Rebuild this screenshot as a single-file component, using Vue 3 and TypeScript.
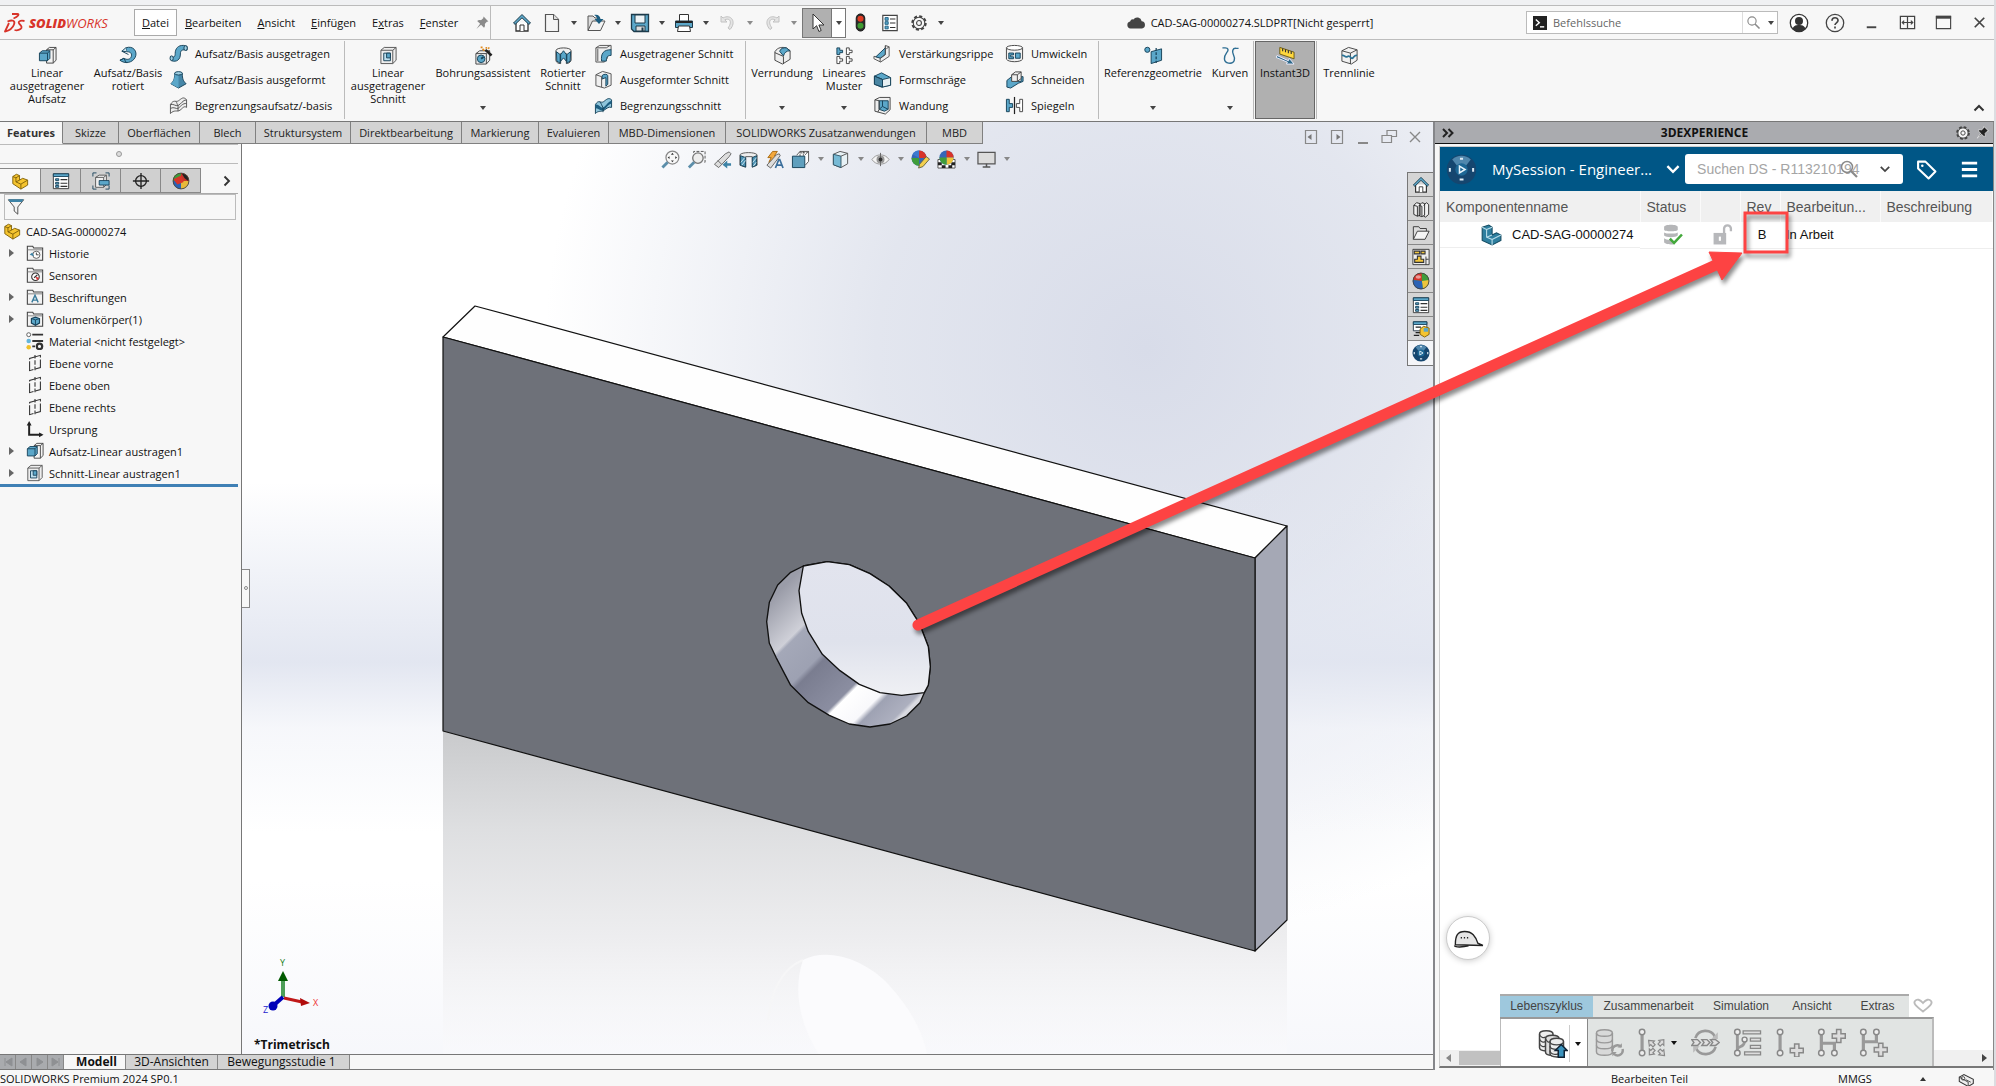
<script setup lang="ts">
import { h } from 'vue'

const B = '#5ba7c9'
const D = '#1c5d80'
const K = '#333'

const art: Record<string, string> = {
  home: `<path d="M4 9.5V18h12V9.5" fill="#fff" stroke="${K}" stroke-width="1.3"/><path d="M8 18v-6h4v6" fill="#fff" stroke="${K}"/><path d="M10 1.5 1.5 10l1.6 1.4L10 4.8l6.900 6.600L18.500 10z" fill="${B}" stroke="#1d3b4b"/>`,
  file: `<path d="M3.500 1.500h8l5 5v12h-13z" fill="#f4f4f4" stroke="#555" stroke-width="1.200"/><path d="M11.500 1.500v5h5" fill="#ddd" stroke="#555"/>`,
  open: `<path d="M2 17.500V3h5l2 2h4v3" fill="#ddd" stroke="#555"/><path d="M2 17.500 6.500 8H19l-4.500 9.500z" fill="#f3f3f3" stroke="#555"/><path d="M8 2c4-1 6 1 6.500 4h3L13 11 8.500 6H11c0-2-1-3-3-4z" fill="${D}"/>`,
  save: `<path d="M1.500 1.500h17v17H4l-2.500-2.500z" fill="${B}" stroke="#1d3b4b" stroke-width="1.300"/><path d="M5 2h10v8H5z" fill="#eef4f7" stroke="#1d3b4b"/><path d="M6 13h9v5H6z" fill="#ddd" stroke="#1d3b4b"/><path d="M11.500 14.500h2V18h-2z" fill="#1d3b4b"/>`,
  print: `<path d="M5.500 8V1.500h9V8" fill="#fff" stroke="${K}"/><path d="M1.500 8h17v6.500h-17z" fill="${B}" stroke="#1d3b4b"/><path d="M2 8h16v2H2z" fill="#222"/><path d="M4.500 13h11l1 5.500h-13z" fill="#fff" stroke="${K}"/>`,
  undo: `<path d="M3 3v6h6L6.800 6.800C12 4.500 14.500 9 10 15l2 1.500C19 9 13 .500 5 5z" fill="#e4e4e4" stroke="#c2c2c2"/>`,
  redo: `<path d="M17 3v6h-6l2.200-2.200C8 4.500 5.500 9 10 15l-2 1.500C1 9 7 .500 15 5z" fill="#e4e4e4" stroke="#c2c2c2"/>`,
  cursor: `<path d="M6 1v15l3.600-3.300 2.300 5.800 2.300-1-2.300-5.500H17z" fill="#fff" stroke="#333"/>`,
  traffic: `<rect x="5.500" y="1" width="9" height="18" rx="4.500" fill="#2b2b2b" stroke="#111"/><circle cx="10" cy="6" r="3.200" fill="#e03c24"/><circle cx="10" cy="13.500" r="3.200" fill="#3f9b31"/>`,
  list: `<path d="M2 1.500h16v17H2z" fill="#fff" stroke="#444" stroke-width="1.300"/><path d="M4.500 4h3.500v3H4.500zM4.500 8.500h3.500v3H4.500zM4.500 13.500h3.500v3H4.500z" fill="${B}" stroke="${D}"/><path d="M10 5.500h6M10 10h6M10 15h6" stroke="#333" stroke-width="1.200"/>`,
  gear: `<circle cx="10" cy="10" r="7.400" fill="none" stroke="#444" stroke-width="2.400" stroke-dasharray="3.400 2.410"/><circle cx="10" cy="10" r="6.400" fill="#f7f7f7" stroke="#444" stroke-width="1.200"/><circle cx="10" cy="10" r="2.700" fill="none" stroke="#444" stroke-width="1.200"/>`,
  pin: `<path d="M12 2l6 6-2 .500-2.500 2.800c.600 2 .200 3.500-1 4.700L8.800 12.300 3 17.500 7.600 11 4 7.500c1.300-1.200 2.800-1.500 4.700-1L11.500 4z" fill="#8b8b8b"/>`,
  pinDark: `<path d="M12 2l6 6-2 .500-2.500 2.800c.600 2 .200 3.500-1 4.700L8.800 12.300 3 17.500 7.600 11 4 7.500c1.300-1.200 2.800-1.500 4.700-1L11.500 4z" fill="#222" stroke="#eee"/>`,
  cloud: `<path d="M4.500 15.500a3.500 3.500 0 0 1-.4-6.900 3 3 0 0 1 3.300-2.200 4.600 4.600 0 0 1 8.300 1.800 3.700 3.700 0 0 1 .3 7.300z" fill="#444"/>`,
  search: `<circle cx="8" cy="8" r="5.500" fill="none" stroke="#8a8a8a" stroke-width="1.500"/><path d="M12 12l6 6" stroke="#8a8a8a" stroke-width="2.200"/>`,
  prompt: `<path d="M0 0h20v20H0z" fill="#222"/><path d="M4 5l5 4.500L4 14" fill="none" stroke="#fff" stroke-width="2"/><path d="M10 15.500h6" stroke="#fff" stroke-width="2"/>`,
  user: `<circle cx="10" cy="10" r="8.700" fill="#fff" stroke="#333" stroke-width="1.300"/><circle cx="10" cy="8" r="4" fill="#333"/><path d="M3.500 16c1-3.500 3.500-4 6.500-4s5.500.500 6.500 4a8.700 8.700 0 0 1-13 0z" fill="#333"/>`,
  help: `<circle cx="10" cy="10" r="8.700" fill="none" stroke="#444" stroke-width="1.300"/><path d="M7 7.800c0-4 6-4 6-.3 0 2.300-3 2.300-3 4.500M10 13.500v2" fill="none" stroke="#444" stroke-width="1.700"/>`,
  min: `<path d="M5 15h10" stroke="#444" stroke-width="2"/>`,
  span: `<path d="M2.500 3.500h15v13h-15zM10 3.500v13" fill="none" stroke="#444" stroke-width="1.300"/><path d="M4.500 10h11M6.500 8l-2 2 2 2M13.500 8l2 2-2 2" fill="none" stroke="#444" stroke-width="1.300"/>`,
  max: `<path d="M2.500 3.500h15v13h-15z" fill="none" stroke="#444" stroke-width="1.200"/><path d="M2 3h16v3H2z" fill="#444"/>`,
  close: `<path d="M5 5l10 10M15 5L5 15" stroke="#444" stroke-width="1.800"/>`,
  docLeft: `<path d="M4.500 3.500h11v13h-11z" fill="none" stroke="#888" stroke-width="1.200"/><path d="M10.500 7v6L6.500 10z" fill="#777"/>`,
  docRight: `<path d="M4.500 3.500h11v13h-11z" fill="none" stroke="#888" stroke-width="1.200"/><path d="M9.500 7v6l4-3z" fill="#777"/>`,
  docMin: `<path d="M5 16h10" stroke="#888" stroke-width="2"/>`,
  docRestore: `<path d="M8 8.500v-5h9.500v6H13M3 8.500h9.500v7H3z" fill="none" stroke="#888" stroke-width="1.200"/>`,
  docClose: `<path d="M5 5l10 10M15 5L5 15" stroke="#888" stroke-width="1.400"/>`,
  extrude: `<path d="M9 4l3-2.500h7V15l-3 3H9z" fill="#f3f3f3" stroke="#444"/><path d="M16 18V4H9M16 4l3-2.500" fill="none" stroke="#444"/><path d="M1.500 7.500L4.500 5h8v8l-2.500 2.500h-8.500z" fill="${B}" stroke="#17425a"/><path d="M1.500 7.500H10v8M10 7.500L12.500 5" fill="none" stroke="#17425a"/>`,
  revolve: `<path d="M7 2c8-3 13 4 10 10-3 6-11 7-16 3l4-2c4 2 7 1 8-2 1-4-2-5-5-5z" fill="${B}" stroke="#17425a"/><path d="M3 5.500l7 3.500M7 2L3 5.500l5 .500" fill="#cde5ef" stroke="#17425a"/><path d="M1 15l4-2 3 5" fill="none" stroke="#17425a"/>`,
  sweep: `<path d="M1.500 13c4 2 5 0 5-3 0-5 3-9 9-8.500l3.500 1v4c-5-1-7 0-7 4 0 6-4 9-9.500 7z" fill="${B}" stroke="#17425a"/><ellipse cx="17.500" cy="4.300" rx="1.800" ry="2.500" fill="#9fd0e4" stroke="#17425a"/><ellipse cx="2.800" cy="15" rx="1.700" ry="2.500" fill="#9fd0e4" stroke="#17425a"/>`,
  loft: `<path d="M6 3.500h8c0 6 1 8 4 11l-8 4.500-8-4.500c3-3 4-5 4-11z" fill="#4687a8" stroke="#17425a"/><path d="M10 5v14l-8-4.500c3-3 4-5 4-11z" fill="${B}"/><ellipse cx="10" cy="3.500" rx="4" ry="1.800" fill="#9fd0e4" stroke="#17425a"/>`,
  boundary: `<path d="M1.500 9C5 3 7 7 10 5s5-5 8.500-1v8c-3-2-4 1-7 3s-6-1-10 3.500z" fill="#eee" stroke="#555"/><path d="M1.500 9c4-1 5 2 8 1s5-6 9-6M7 5.500c2 2 1 3 2.500 4.500v6M1.500 13c4-2 6 1 8 0s5-6 9-5" fill="none" stroke="#555"/>`,
  cutExtrude: `<path d="M2 4.500l3.500-3H18V15l-3.500 3.500H2z" fill="#eee" stroke="#555"/><path d="M2 4.500h12.500v14M14.500 4.500l3.500-3" fill="none" stroke="#555"/><path d="M5 7.500h7v8H5z" fill="#bfe0ee" stroke="#17425a"/><path d="M8 7.500h4v5H8z" fill="${B}" stroke="#17425a"/>`,
  wizard: `<path d="M2 8l4-3h10.500v10L13 19H2z" fill="#eee" stroke="#444"/><path d="M2 8h11v11M13 8l3.500-3" fill="none" stroke="#444"/><circle cx="7.500" cy="13.500" r="4" fill="${B}" stroke="#17425a"/><path d="M7.500 13.500l2.500-2" stroke="#17425a" stroke-width="2"/><path d="M9 3l2 2M13 1v2M7 1.500h2M16 1.500l-1 1.500" stroke="#e08a1e" stroke-width="1.700"/><path d="M12 4l6.500 6" stroke="#222" stroke-width="2.600"/>`,
  cutRevolve: `<path d="M2 5c0-4 16-4 16 0v10c-1 3-4 3.500-5 3.500V8H7v10.500c-2 0-5-1-5-3.500z" fill="#f0f0f0" stroke="#444"/><path d="M2.500 6L6.500 9v9L3 16zM17.500 6l-4 3v9l3.500-2zM10 5L7 9v7l3-3.500L13 16V9z" fill="${B}" stroke="#17425a"/>`,
  cutSweep: `<path d="M2 4l4-2.500h12V6L14 10v5l-3 4H2z" fill="#eee" stroke="#555"/><path d="M8 18c-1-8 2-12 10-12v6c-4 0-5 2-5 6z" fill="${B}" stroke="#17425a"/><path d="M2 4h11l4-2.500M4 5v13" fill="none" stroke="#555"/>`,
  cutLoft: `<path d="M2 5l7-3.500L18 4v12l-7 3-9-2.500z" fill="#f0f0f0" stroke="#555"/><path d="M8.500 6c1-2 6-2 6 0v9l-2 2V8l-4 1.500z" fill="${B}" stroke="#17425a"/><path d="M2 5l6 2v11" fill="none" stroke="#555"/>`,
  cutBoundary: `<path d="M1.500 9C5 3 7 8 10 6s5-5 8.500-2v8c-3-1-5 1-8 3s-6 0-9 3.500z" fill="#8fc5db" stroke="#17425a"/><path d="M1.500 9c4-1 5 4 8 3s5-6 9-7v3c-4 1-6 6-9 7s-5-2-8-2z" fill="${D}"/><path d="M6 6c2 2 2 4 3.500 6v5" fill="none" stroke="#17425a"/>`,
  fillet: `<path d="M2 6c3-5 8-5 12-4l4 3v9l-8 5-8-4z" fill="#eee" stroke="#444"/><path d="M7 5.500c1-3 4-4 7-3.500l4 3c-4 0-6 2-7 5.500z" fill="${B}" stroke="#17425a"/><path d="M2 7l9 4v8" fill="none" stroke="#444"/>`,
  pattern: `<path d="M2 2h3v2.500h3V7H5v2H2z" fill="${B}" stroke="#17425a"/><path d="M12 2h3v2.500h3V7h-3v2h-3zM2 11h3v2.500h3V16H5v2.500H2zM12 11h3v2.500h3V16h-3v2.500h-3z" fill="#fff" stroke="#444"/>`,
  rib: `<path d="M13 1.500l4 1.500v10l-9 6-7-3.500V13l6 1 6-5z" fill="#eee" stroke="#555"/><path d="M13 4L3 13.500l5 1.500 5-4z" fill="${B}" stroke="#17425a"/><path d="M13 2v9l-5.500 4V19M17 3l-3 2" fill="none" stroke="#555"/>`,
  draft: `<path d="M1.500 6.500L9 3l9.500 5v8L9 18l-7.500-3z" fill="${B}" stroke="#17425a"/><path d="M1.500 6.500L10 10v8l8.500-2V8L10 10z" fill="#e8f0f3" stroke="#17425a"/><path d="M1.500 6.500L10 10v8l-8.500-3z" fill="#4a86a3" stroke="#17425a"/>`,
  shell: `<path d="M2 4l5-2.500h11v13L13 19 2 16z" fill="#eee" stroke="#444"/><path d="M6.500 5H16v9l-4 2-5.500-2z" fill="${B}" stroke="#17425a"/><path d="M10 5v6l6 3M10 11l-3.500 3" fill="none" stroke="#17425a"/><path d="M2 4l4.500 1v9L5 17" fill="none" stroke="#444"/>`,
  wrap: `<path d="M1.500 4v12c2 3.500 15 3.500 17 0V4" fill="#f2f2f2" stroke="#444"/><ellipse cx="10" cy="4" rx="8.500" ry="2.500" fill="#fff" stroke="#444"/><path d="M4 9.500h5v2H6v2h3v2H4zM11 9.500h5v5.500h-5z" fill="${B}" stroke="#17425a"/>`,
  intersect: `<path d="M2 11l5-4h4v5h6V7h2v5l-5 2-8 5-4-1z" fill="${B}" stroke="#17425a"/><path d="M7 5l4-3h6v7l-4 3H7z" fill="#f0f0f0" stroke="#444"/><path d="M7 5h6v7M13 5l4-3" fill="none" stroke="#444"/>`,
  mirror: `<path d="M1.500 3.500h3V8H8v4H4.500v4.500h-3z" fill="${B}" stroke="#17425a"/><path d="M18.500 3.500h-3V8H12v4h3.500v4.500h3z" fill="#fff" stroke="#444"/><path d="M10 1v18" stroke="#222" stroke-width="1.300"/>`,
  refgeo: `<circle cx="3.500" cy="4" r="2.700" fill="${B}" stroke="#17425a"/><path d="M7.500 6L18.500 3v12l-11 3.500z" fill="${B}" stroke="#17425a"/><path d="M12.800 2v16" stroke="#17425a" stroke-width="1.300" stroke-dasharray="3 1.500"/>`,
  curves: `<path d="M1.500 2h3c3 0 4 2 1.500 5-3 4-4 10 2 11 7 1 7-5 5-9-1.500-3-1-7 3-6.500h2.500" fill="none" stroke="#2e6e93" stroke-width="1.500"/>`,
  instant: `<path d="M4 1.500l15 5v7l-15-5z" fill="#ffd83e" stroke="#6b5a12"/><path d="M7 2.500v3M10 3.500v3M13 4.500v3M16 5.500v3" stroke="#333" stroke-width="1.200"/><path d="M1 10l12 5.500 1-2.500 5 6h-8l1-2L0 12z" fill="#2c6888" stroke="#eef"/>`,
  split: `<path d="M2 5l7-3.500L18 4v11l-6 4-10-3z" fill="#f1f1f1" stroke="#444"/><path d="M2 5l9 2.500V19M11 7.500L18 4" fill="none" stroke="#444"/><path d="M2 10c3-1 3 3 6 1s3 3 5 2 2-4 5-3" fill="none" stroke="#2a7295" stroke-width="1.800"/>`,
  part: `<path d="M2 5l4-2.500 3.500 1.500v5L13 7l5.500 2v5.500L11 19 2 13z" fill="#f5c42f" stroke="#7d5f08"/><path d="M2 5l3.500 1.500V11l5.500 2.500V19M5.500 6.500L9.500 4M5.500 11l4-2M11 13.500l7.500-4.500" fill="none" stroke="#7d5f08"/>`,
  partBlue: `<path d="M2 3l6-2 3 2v7l4-2 4 2v5l-8 4-9-4z" fill="#2f7f9f" stroke="#144c63"/><path d="M2 3l4 2v7l5 2v5M6 5l5-2M6 12l5-2M11 14l8-4" fill="none" stroke="#b9dde9"/>`,
  props: `<path d="M1.500 2h17v16.500h-17z" fill="#fff" stroke="#333"/><path d="M1.500 2h17v3h-17z" fill="${B}" stroke="#17425a"/><path d="M4 7.500h3.500v2H4zM4 11.500h3.500v2H4zM4 15h3.500v2H4z" fill="${B}" stroke="#17425a"/><path d="M9.500 8.500H17M9.500 12.500H17M9.500 16H17" stroke="#333" stroke-width="1.200"/>`,
  config: `<path d="M1 5V1h4M15 1h4v4M19 15v4h-4M5 19H1v-4" fill="none" stroke="#17425a"/><path d="M4 6l4-2.500h8V14l-3 3H4z" fill="#eee" stroke="#555"/><path d="M4 6h9v11M13 6l3-2.500" fill="none" stroke="#555"/><path d="M8 9.500h11v5H8z" fill="${B}" stroke="#17425a"/>`,
  target: `<circle cx="10" cy="10" r="6" fill="none" stroke="#222" stroke-width="1.500"/><path d="M10 1v18M1 10h18" stroke="#222" stroke-width="1.500"/>`,
  ball: `<circle cx="10" cy="10" r="9" fill="#3f9d3b"/><path d="M11 10L11 1a9 9 0 0 0-10 8z" fill="#d8342a"/><path d="M11 10V1a9 9 0 0 1 8 8z" fill="#3f9d3b"/><path d="M11 10l8-1a9 9 0 0 1-7 10z" fill="#eec53b"/><path d="M11 10l1 9A9 9 0 0 1 1 9z" fill="#2b63b5"/><circle cx="10" cy="10" r="8.800" fill="none" stroke="#444"/><ellipse cx="7" cy="5.500" rx="3" ry="2" fill="#fff" opacity=".5"/>`,
  ballDark: `<circle cx="10" cy="10" r="9" fill="#e8b93a"/><path d="M10 10V1a9 9 0 0 0-9 9z" fill="#3f9d3b"/><path d="M10 10V1a9 9 0 0 1 9 9z" fill="#c8352a"/><path d="M10 10v9a9 9 0 0 1-9-9z" fill="#2b63b5"/><path d="M11 2c5 0 8 4 7 8l-4-3z" fill="#222"/><path d="M1.500 8L10 4l3 7-7 3z" fill="#d8342a"/><circle cx="10" cy="10" r="8.800" fill="none" stroke="#444"/>`,
  ballEdit: `<circle cx="8.500" cy="8.500" r="8" fill="#3467b8"/><path d="M8.500 8.500V.500a8 8 0 0 1 8 8z" fill="#d8342a"/><path d="M8.500 8.500l-7-4a8 8 0 0 1 7-4z" fill="#3d7bd0"/><path d="M8.500 8.500v8a8 8 0 0 1-8-8z" fill="#3f9d3b"/><path d="M8 19l1-4 7-8 3.500 2.500-7 8z" fill="#f3cf4d" stroke="#664"/>`,
  ballScene: `<path d="M1 10h18v9H1z" fill="#fff" stroke="#555"/><path d="M1 13h4v3H1zM15 13h4v3h-4zM5 16h4v3H5zM12 16h4v3h-4z" fill="#222"/><circle cx="10" cy="8" r="7.500" fill="#3467b8"/><path d="M10 8V.500a7.500 7.500 0 0 1 7.500 7.500z" fill="#d8342a"/><path d="M10 8h7.500a7.500 7.500 0 0 1-7.500 7.500z" fill="#eec53b"/><path d="M10 8v7.500A7.500 7.500 0 0 1 2.500 8z" fill="#3f9d3b"/>`,
  zoomFit: `<circle cx="12" cy="8" r="6.800" fill="#f8f8f8" stroke="#888" stroke-width="1.300"/><path d="M12 3l1.500 2h-3zM12 13l1.500-2h-3zM7 8l2-1.500v3zM17 8l-2-1.500v3z" fill="#333"/><path d="M7 13l-5.500 5.500" stroke="#5c8eaa" stroke-width="3"/>`,
  zoomArea: `<path d="M7 3V1.500h12V13h-2" fill="none" stroke="#555" stroke-dasharray="3 1.500"/><circle cx="11.500" cy="8.500" r="5.500" fill="#eee" stroke="#777" stroke-width="1.400"/><path d="M7.500 13L2 18.500" stroke="#5c8eaa" stroke-width="3"/>`,
  prevView: `<path d="M1.500 15L13 4l4-2 2 2-2 3L6 18.500z" fill="#ddd" stroke="#666"/><path d="M5 11l4 4" stroke="#666"/><path d="M19 14h-4v-3l-5 4.500 5 4v-3h4z" fill="#3e83a6"/>`,
  section: `<path d="M1 5c2-3 16-3 18 0v11l-5 2V7H7v11l-6-2z" fill="#eee" stroke="#555"/><path d="M1.500 6L7 8v10l-5.500-2zM18.500 6L14 8v10l4.500-2z" fill="#4d93b4" stroke="#17425a"/><path d="M2 13l4-5M3 16l4-5M14.500 13l4-5M15 17l3-4" stroke="#cfe6f0"/>`,
  dynamic: `<path d="M8 1.500h5L10 6h4L4 13l2.500-5H3z" fill="#f4a83c" stroke="#a8680e"/><path d="M2 16L12 5l3-1 1 2L6 19z" fill="#ddd" stroke="#666"/><path d="M11 19l3.500-9h1L19 19M12.500 16h5" fill="none" stroke="#3b6f9c" stroke-width="1.800"/>`,
  orient: `<path d="M6 5.500L9.500 1.500h9V12L15 16" fill="#fff" stroke="#555"/><path d="M9.500 1.500v5M18.500 1.500L14 6M10 3h7M13 1.500V6" fill="none" stroke="#444" stroke-dasharray="2 1"/><path d="M1.500 6.500h13v12h-13z" fill="#5f9fbd" stroke="#17425a"/>`,
  display: `<path d="M2.500 4.500l7-3 8 2v11l-7 4-8-3z" fill="#e7f1f5" stroke="#555"/><path d="M2.500 4.500l8 2v12l-8-3z" fill="#77bad5" stroke="#356"/><path d="M10.500 6.500l7-3" stroke="#555"/>`,
  eye: `<path d="M1 10c4-6.500 14-6.500 18 0-4 6.500-14 6.500-18 0z" fill="#f4f4f4" stroke="#999"/><circle cx="10" cy="10" r="4.200" fill="#999"/><path d="M10 3v14" stroke="#666"/><circle cx="10" cy="10" r="2" fill="#333"/>`,
  monitor: `<path d="M1 2.500h18v12H1z" fill="#dcdcdc" stroke="#555" stroke-width="1.300"/><path d="M10 14.500v3M6 18h8" stroke="#555" stroke-width="1.600"/>`,
  books: `<path d="M2 6l3-3 4 1v13l-3 1-4-2zM8 6l3-3 3 1v13l-3 1.500-3-1zM13 6l3-3 2.500 2v11L15 19l-2-1" fill="#f2f2f2" stroke="#222"/><path d="M2 6l4 1v11M8 6l3 1v11" fill="none" stroke="#222"/>`,
  folder: `<path d="M1.500 17V3h6l1.500 2h7v3" fill="#ddd" stroke="#333"/><path d="M1.500 17L6 8h13l-4.500 9z" fill="#f5f5f5" stroke="#333"/>`,
  palette: `<path d="M1 1.500h18v17H1z" fill="#eee" stroke="#333"/><path d="M2.500 3.500h6v3h-6zM10 3.500h4.500v3H10zM6 9h4v3.500h3V16H3v-3.500h3z" fill="#f2c63c" stroke="#333" stroke-width="1.200"/><path d="M15.500 9.500v9M15.500 12.500h3" stroke="#333"/>`,
  propPart: `<path d="M1.500 2h15v10h-15z" fill="#fff" stroke="#234"/><path d="M1.500 2h15v3h-15z" fill="${B}" stroke="#17425a"/><path d="M4 8h6M4 14h5M2 17h6" stroke="#222" stroke-width="1.300"/><path d="M9 10l4-3 6 2v7l-5 3-5-3z" fill="#f5c42f" stroke="#7d5f08"/><path d="M13 9h5v4h-5z" fill="${B}"/>`,
  compass: `<circle cx="10" cy="10" r="9.500" fill="#15466f"/><path d="M4 3.500a9 9 0 0 1 12 0L12.500 8h-5z" fill="#5f97bd" opacity=".8"/><circle cx="10" cy="10" r="4" fill="#1d6795"/><path d="M8.700 7.800l3.600 2.200-3.600 2.200z" fill="none" stroke="#e6f3fb"/><path d="M9 3h2M2.500 9v2.500M17.500 9v2.500M8.800 16.500h2.500" stroke="#dceaf4" stroke-width="1.300"/>`,
  filter: `<path d="M1.500 2h17L12 10v8l-4-3.500V10z" fill="#f3f3f3" stroke="#444"/><path d="M1.500 1.500h17l-2 3h-13z" fill="#3e83a6"/>`,
  fHist: `<path d="M1.500 18V2.500h6l1 2h10V18z" fill="#f3f3f3" stroke="#444" stroke-width="1.200"/><path d="M1.500 6.500h17" stroke="#777"/><circle cx="11.500" cy="12" r="4" fill="#fff" stroke="#555"/><path d="M11.500 9.500V12h2.500" fill="none" stroke="#333"/><path d="M4 12l3-2.500 2 4z" fill="#3e83a6"/>`,
  fSens: `<path d="M1.500 18V2.500h6l1 2h10V18z" fill="#f3f3f3" stroke="#444" stroke-width="1.200"/><path d="M1.500 6.500h17" stroke="#777"/><circle cx="10.500" cy="12" r="4.200" fill="#fff" stroke="#333" stroke-width="1.200"/><path d="M9 13l3.500-3" stroke="#333" stroke-width="1.300"/><path d="M10.500 12l4 1-2 3z" fill="#d33"/>`,
  fAnno: `<path d="M1.500 18V2.500h6l1 2h10V18z" fill="#f3f3f3" stroke="#444" stroke-width="1.200"/><path d="M1.500 6.500h17" stroke="#777"/><path d="M6.500 16l3.500-8 3.500 8M8 13.500h4" fill="none" stroke="#3b7c9c" stroke-width="1.600"/>`,
  fBody: `<path d="M1.500 18V2.500h6l1 2h10V18z" fill="#f3f3f3" stroke="#444" stroke-width="1.200"/><path d="M1.500 6.500h17" stroke="#777"/><path d="M6 9.500l4.500-1.500L15 9.500v5L10.500 17 6 14.500z" fill="${B}" stroke="#17425a" stroke-width="1.300"/><path d="M6 9.500l4.500 1.500v6M10.500 11L15 9.500" fill="none" stroke="#17425a"/>`,
  material: `<circle cx="3" cy="3" r="2.200" fill="#fff" stroke="#555"/><circle cx="3" cy="10" r="2.500" fill="#63b5dc"/><circle cx="3" cy="17" r="2.500" fill="#efc02a"/><path d="M7 3h12M7 10h12M7 16h3" stroke="#333" stroke-width="2"/><circle cx="15" cy="16" r="3" fill="none" stroke="#333" stroke-width="2.500"/>`,
  plane: `<path d="M4 5l12-3.500V15L4 18.500z" fill="none" stroke="#333" stroke-width="1.200" stroke-dasharray="15 2"/><path d="M10 1v4M10 7v5M10 14v4" stroke="#333" stroke-width="1.200"/>`,
  origin: `<path d="M3.500 4v12.500H17" fill="none" stroke="#222" stroke-width="2.200"/><path d="M.800 6l2.700-5 2.700 5zM14.500 13.800l5 2.700-5 2.700z" fill="#222"/>`,
  stack: `<path d="M1 4c0-3 9-3 9 0v9c0 3-9 3-9 0z" fill="#eee" stroke="#444"/><path d="M5 7c0-3 9-3 9 0v9c0 3-9 3-9 0z" fill="#ddd" stroke="#444"/><path d="M8 9c0-3 9-3 9 0v8c0 3-9 3-9 0z" fill="#ececec" stroke="#444"/><path d="M1 4c0 2 3 3 4 2M5 7c1 2 2 3 3 2M8 9c0 3 9 3 9 0M8 12c0 3 9 3 9 0M8 15c0 3 5 3 6 2M1 7c0 2 3 3 4 2M1 10c0 2 3 3 4 2" fill="none" stroke="#444" stroke-width=".8"/><path d="M15.500 11l4 4h-2v4.500h-4V15h-2z" fill="#3b93bd" stroke="#123"/>`,
  dbRefresh: `<path d="M1 3.500c0-3 11-3 11 0v13c0 3-11 3-11 0z" fill="#d8d9d9" stroke="#999"/><path d="M1 3.500c0 3 11 3 11 0M1 8c0 3 11 3 11 0M1 12c0 3 11 3 11 0" fill="none" stroke="#999"/><path d="M12 16a3.500 3.500 0 0 1 6-3M19 14.500a3.500 3.500 0 0 1-6.500 2.500" fill="none" stroke="#999" stroke-width="1.700"/><path d="M18.500 10.500v3h-3zM12 19.500v-3h3z" fill="#999"/>`,
  lifecycle: `<path d="M3.500 4v12" stroke="#999" stroke-width="2.200"/><circle cx="3.500" cy="2.800" r="1.900" fill="#eee" stroke="#888"/><circle cx="3.500" cy="17.200" r="1.900" fill="#eee" stroke="#888"/><path d="M8 8.500l4 .500-1 1 1.500 1.500-1.500 1.500L9.500 11.500 8.500 12.500zM18.500 8v4l-1-1-1.500 1.500-1.500-1.500L16 9.500 15 8.500zM8.500 18.500v-4l1 1 1.500-1.500 1.500 1.500L11 17l1 1zM19 19l-4-.500 1-1-1.500-1.500 1.500-1.500 1.500 1.500 1-1z" fill="#ddd" stroke="#888" stroke-width=".8"/>`,
  replace: `<path d="M3 7C5 .500 14 .500 16.500 6M17 13c-2 6.500-11 6.500-13.500 1" fill="none" stroke="#999" stroke-width="1.800"/><path d="M18.500 3v4.500H14zM1.500 17v-4.500H6z" fill="#bbb"/><path d="M.500 8h4l2 2-2 2h-4L2 10zM7.500 8h3.500l2 2-2 2H7.500L9 10zM13.500 8H17l2.500 2-2.500 2h-3.500l1.500-2z" fill="#e2e2e2" stroke="#888"/>`,
  tree: `<path d="M3 4v12M3 15c0-3 5-1 5-6" fill="none" stroke="#999" stroke-width="2"/><circle cx="3" cy="2.800" r="1.900" fill="#eee" stroke="#888"/><circle cx="3" cy="17.200" r="1.900" fill="#eee" stroke="#888"/><circle cx="8" cy="8" r="1.700" fill="#eee" stroke="#888"/><path d="M7 2h12v2H7zM12 7h7v2h-7zM12 12h7v2h-7zM8 16.500h11v2H8z" fill="#ddd" stroke="#888" stroke-width=".9"/>`,
  newBranch: `<path d="M3.500 4v12" stroke="#999" stroke-width="2.200"/><circle cx="3.500" cy="2.800" r="1.900" fill="#eee" stroke="#888"/><circle cx="3.500" cy="17.200" r="1.900" fill="#eee" stroke="#888"/><path d="M13.500 11h3v3h3v3h-3v3h-3v-3h-3v-3h3z" fill="#ddd" stroke="#888"/>`,
  branchUp: `<path d="M3 4v12M3 10.500h9V16" fill="none" stroke="#999" stroke-width="2.200"/><circle cx="3" cy="2.800" r="1.900" fill="#eee" stroke="#888"/><circle cx="3" cy="17.200" r="1.900" fill="#eee" stroke="#888"/><circle cx="12" cy="17.200" r="1.900" fill="#eee" stroke="#888"/><path d="M13.500 1h3v3h3v3h-3v3h-3V7h-3V4h3z" fill="#ddd" stroke="#888"/>`,
  branchDown: `<path d="M3 4v12M3 9.500h9V4" fill="none" stroke="#999" stroke-width="2.200"/><circle cx="3" cy="2.800" r="1.900" fill="#eee" stroke="#888"/><circle cx="3" cy="17.200" r="1.900" fill="#eee" stroke="#888"/><circle cx="12" cy="2.800" r="1.900" fill="#eee" stroke="#888"/><path d="M13.500 10.500h3v3h3v3h-3v3h-3v-3h-3v-3h3z" fill="#ddd" stroke="#888"/>`,
  dbOk: `<path d="M2 3c0-3 13-3 13 0v2.500c0 2-13 2-13 0zM2 8c2 1.500 11 1.500 13 0v3c-2 2-11 2-13 0zM2 13.500c2 1.500 5 1.500 7 1.300L12 19c-3 1-10 .500-10-2z" fill="#b5b6b8"/><path d="M7.500 14l4 4L19 10" fill="none" stroke="#43a83b" stroke-width="2.400"/>`,
  lock: `<path d="M1.500 8.500h12v11h-12z" fill="#b7b8bb"/><path d="M11.500 8.500V4a3.300 3.300 0 0 1 6.500 0v3" fill="none" stroke="#b7b8bb" stroke-width="2.200"/><path d="M7.500 12v4" stroke="#fff" stroke-width="2"/>`,
  tag: `<path d="M2 2.500h7L18.500 12 12 18.500 2 9z" fill="none" stroke="#fff" stroke-width="2" stroke-linejoin="round"/><circle cx="6" cy="6.500" r="1.200" fill="#fff"/>`,
  chev: `<path d="M3 6.500l7 7 7-7" fill="none" stroke="currentColor" stroke-width="3"/>`,
  burger: `<path d="M1 2.500h18M1 10h18M1 17.500h18" stroke="#fff" stroke-width="3.300"/>`,
  heart: `<path d="M2 5c2-2.500 5-1.500 8 2 3-3.500 6-4.500 8-2s-1 5-8 10.500C3 10 0 7.500 2 5z" fill="none" stroke="#bbb" stroke-width="1.900"/>`,
  helmet: `<path d="M1.500 14C1.500 8 3 5.500 7.500 5.500c5 0 7 3 8.500 7.500l3.300 1.500z" fill="#e6e6e6" stroke="#222" stroke-width=".9"/><path d="M1 14.500c0 1.500 6 1 9 .200" fill="none" stroke="#222" stroke-width=".9"/><path d="M5 9.500h.800M7 9.500h.800M9 9.500h.800" stroke="#222"/>`,
  statusTag: `<path d="M1.500 6L7 3l11 5.500v5L12 17 1.500 11z" fill="#eee" stroke="#333" stroke-width="1.200"/><circle cx="6" cy="7.500" r="2" fill="#fff" stroke="#333"/><path d="M9 9l6 3M1.500 6L12 12v5" fill="none" stroke="#333"/>`,
}

const Icon = (p: { name: string; size?: number }) =>
  h('svg', {
    viewBox: '0 0 20 20',
    width: p.size ?? 18,
    height: p.size ?? 18,
    class: 'ic',
    'aria-hidden': 'true',
    innerHTML: art[p.name],
  })
Icon.props = ['name', 'size']

const menus = [
  ['D', 'atei', ''], ['B', 'earbeiten', ''], ['A', 'nsicht', ''],
  ['E', 'infügen', ''], ['x', 'tras', 'E'], ['F', 'enster', ''],
]

const quick = [
  { n: 'file', t: 'Neu' }, { n: 'open', t: 'Öffnen' }, { n: 'save', t: 'Speichern' },
  { n: 'print', t: 'Drucken' }, { n: 'undo', t: 'Rückgängig', off: true }, { n: 'redo', t: 'Wiederholen', off: true },
]

const windowButtons = ['user', 'help', 'min', 'span', 'max', 'close']

interface Big { n: string; t: string; w: number; drop?: boolean; on?: boolean }
interface Col { w: number; items: [string, string][] }
interface Group { big: Big[]; cols: Col[] }
const ribbon: Group[] = [
  {
    big: [{ n: 'extrude', t: 'Linear ausgetragener Aufsatz', w: 86 }, { n: 'revolve', t: 'Aufsatz/Basis rotiert', w: 76 }],
    cols: [{ w: 178, items: [['sweep', 'Aufsatz/Basis ausgetragen'], ['loft', 'Aufsatz/Basis ausgeformt'], ['boundary', 'Begrenzungsaufsatz/-basis']] }],
  },
  {
    big: [{ n: 'cutExtrude', t: 'Linear ausgetragener Schnitt', w: 86 }, { n: 'wizard', t: 'Bohrungsassistent', w: 104, drop: true }, { n: 'cutRevolve', t: 'Rotierter Schnitt', w: 56 }],
    cols: [{ w: 154, items: [['cutSweep', 'Ausgetragener Schnitt'], ['cutLoft', 'Ausgeformter Schnitt'], ['cutBoundary', 'Begrenzungsschnitt']] }],
  },
  {
    big: [{ n: 'fillet', t: 'Verrundung', w: 72, drop: true }, { n: 'pattern', t: 'Lineares Muster', w: 52, drop: true }],
    cols: [
      { w: 132, items: [['rib', 'Verstärkungsrippe'], ['draft', 'Formschräge'], ['shell', 'Wandung']] },
      { w: 96, items: [['wrap', 'Umwickeln'], ['intersect', 'Schneiden'], ['mirror', 'Spiegeln']] },
    ],
  },
  { big: [{ n: 'refgeo', t: 'Referenzgeometrie', w: 108, drop: true }, { n: 'curves', t: 'Kurven', w: 46, drop: true }], cols: [] },
  { big: [{ n: 'instant', t: 'Instant3D', w: 60, on: true }], cols: [] },
  { big: [{ n: 'split', t: 'Trennlinie', w: 64 }], cols: [] },
]

const tabs = [
  { t: 'Features', w: 63 }, { t: 'Skizze', w: 56 }, { t: 'Oberflächen', w: 81 }, { t: 'Blech', w: 56 },
  { t: 'Struktursystem', w: 95 }, { t: 'Direktbearbeitung', w: 111 }, { t: 'Markierung', w: 77 },
  { t: 'Evaluieren', w: 70 }, { t: 'MBD-Dimensionen', w: 117 }, { t: 'SOLIDWORKS Zusatzanwendungen', w: 201 }, { t: 'MBD', w: 56 },
]

const docButtons = ['docLeft', 'docRight', 'docMin', 'docRestore', 'docClose']
const managerTabs = ['part', 'props', 'config', 'target', 'ballDark']
const tree = [
  { n: 'fHist', t: 'Historie', open: true }, { n: 'fSens', t: 'Sensoren' }, { n: 'fAnno', t: 'Beschriftungen', open: true },
  { n: 'fBody', t: 'Volumenkörper(1)', open: true }, { n: 'material', t: 'Material <nicht festgelegt>' },
  { n: 'plane', t: 'Ebene vorne' }, { n: 'plane', t: 'Ebene oben' }, { n: 'plane', t: 'Ebene rechts' },
  { n: 'origin', t: 'Ursprung' }, { n: 'extrude', t: 'Aufsatz-Linear austragen1', open: true },
  { n: 'cutExtrude', t: 'Schnitt-Linear austragen1', open: true },
]
const viewTools = [
  { n: 'zoomFit' }, { n: 'zoomArea' }, { n: 'prevView' }, { n: 'section' }, { n: 'dynamic' },
  { n: 'orient', d: true }, { n: 'display', d: true }, { n: 'eye', d: true }, { n: 'ballEdit' },
  { n: 'ballScene', d: true }, { n: 'monitor', d: true },
]
const taskTabs = ['home', 'books', 'folder', 'palette', 'ball', 'props', 'propPart', 'compass']
const dockTabs = [
  { t: 'Lebenszyklus', w: 93 }, { t: 'Zusammenarbeit', w: 111 }, { t: 'Simulation', w: 74 },
  { t: 'Ansicht', w: 68 }, { t: 'Extras', w: 63 },
]
const dockTools = ['dbRefresh', 'lifecycle', 'replace', 'tree', 'newBranch', 'branchUp', 'branchDown']
const navGlyphs = ['M4 2v8M11 2L5 6l6 4z', 'M9 2L3 6l6 4z', 'M4 2l6 4-6 4z', 'M3 2l6 4-6 4zM10 2v8']
</script>

<template>
  <div class="app">
    <div class="strip"></div>
    <header class="titlebar">
      <div class="logo">
        <svg width="22" height="22" viewBox="0 0 22 22" aria-hidden="true">
          <g fill="none" stroke="#d8342a" stroke-width="1.800" stroke-linejoin="round">
            <path d="M8 2h5.500c2 0 1 2.500-4 4.500" />
            <path d="M3.500 9.500c5-2 8-1 6.500 3-1 3-4.500 6-9 7l4-8.500" />
            <path d="M20.500 9c-5-1-7 1-5 3s3 3.500 1 5-4 1.500-6 1" />
          </g>
        </svg>
        <span class="brand"><b>SOLID</b>WORKS</span>
      </div>
      <nav class="menus">
        <button v-for="(m, i) in menus" :key="i" :class="{ first: i === 0 }">{{ m[2] }}<u>{{ m[0] }}</u>{{ m[1] }}</button>
        <button class="pin" aria-label="Anheften"><Icon name="pin" :size="16" /></button>
      </nav>
      <div class="quick">
        <button class="q home" aria-label="Start"><Icon name="home" :size="20" /></button>
        <template v-for="q in quick" :key="q.n">
          <button class="q" :aria-label="q.t"><Icon :name="q.n" :size="20" /></button>
          <button class="qd" :class="{ off: q.off }" :aria-label="q.t + ' Optionen'"><i class="caret"></i></button>
        </template>
        <div class="select">
          <button class="sel" aria-label="Auswählen"><Icon name="cursor" :size="20" /></button>
          <button class="seld" aria-label="Auswahloptionen"><i class="caret"></i></button>
        </div>
        <button class="q wide" aria-label="Neu aufbauen"><Icon name="traffic" :size="19" /></button>
        <button class="q wide" aria-label="Eigenschaften"><Icon name="list" :size="18" /></button>
        <button class="q wide" aria-label="Optionen"><Icon name="gear" :size="18" /></button>
        <button class="qd" aria-label="Weitere Optionen"><i class="caret"></i></button>
      </div>
      <div class="doc"><Icon name="cloud" :size="20" /><span>CAD-SAG-00000274.SLDPRT[Nicht gesperrt]</span></div>
      <div class="cmd">
        <Icon name="prompt" :size="14" />
        <input type="text" placeholder="Befehlssuche" aria-label="Befehlssuche" />
        <button class="cmds" aria-label="Suchen"><Icon name="search" :size="15" /><i class="caret"></i></button>
      </div>
      <div class="winbtns">
        <button v-for="b in windowButtons" :key="b" :aria-label="b"><Icon :name="b" :size="b === 'user' || b === 'help' ? 20 : 19" /></button>
      </div>
    </header>

    <section class="ribbon">
      <div v-for="(g, gi) in ribbon" :key="gi" class="group">
        <button v-for="b in g.big" :key="b.t" class="big" :class="{ on: b.on }" :style="{ width: b.w + 'px' }">
          <Icon :name="b.n" :size="19" />
          <span>{{ b.t }}</span>
          <i v-if="b.drop" class="caret"></i>
        </button>
        <div v-for="(c, ci) in g.cols" :key="ci" class="col" :style="{ width: c.w + 'px' }">
          <button v-for="s in c.items" :key="s[1]" class="small"><Icon :name="s[0]" :size="19" />{{ s[1] }}</button>
        </div>
      </div>
      <button class="fold" aria-label="Einklappen">
        <svg width="12" height="8" viewBox="0 0 12 8"><path d="M1.500 6.500L6 2l4.500 4.500" fill="none" stroke="#333" stroke-width="2" /></svg>
      </button>
    </section>

    <main class="workspace">
      <section class="stage">
        <svg class="scene" viewBox="0 122 1433 948" preserveAspectRatio="xMinYMin slice" aria-hidden="true">
          <defs>
            <linearGradient id="refl" gradientUnits="userSpaceOnUse" x1="0" y1="731" x2="0" y2="1055">
              <stop offset="0" stop-color="#c9cacc" />
              <stop offset=".3" stop-color="#dcdddf" stop-opacity=".95" />
              <stop offset=".65" stop-color="#ececee" stop-opacity=".9" />
              <stop offset="1" stop-color="#fafafc" stop-opacity=".5" />
            </linearGradient>
            <linearGradient id="bore" gradientUnits="userSpaceOnUse" x1="135" y1="135" x2="530" y2="530">
              <stop offset="0" stop-color="#9a9ca8" />
              <stop offset=".22" stop-color="#cfd0d8" />
              <stop offset=".24" stop-color="#a4a8b8" />
              <stop offset=".4" stop-color="#9da1b2" />
              <stop offset=".43" stop-color="#7a7d90" />
              <stop offset=".64" stop-color="#8b8ea1" />
              <stop offset=".66" stop-color="#fff" />
              <stop offset=".78" stop-color="#f8f8fb" />
              <stop offset=".81" stop-color="#9ea2b3" />
              <stop offset=".92" stop-color="#adb0bf" />
              <stop offset=".94" stop-color="#dcdde3" />
              <stop offset="1" stop-color="#b9bbc6" />
            </linearGradient>
            <linearGradient id="through" x1="0" y1="0" x2="0" y2="1">
              <stop offset="0" stop-color="#e2e4ee" />
              <stop offset=".6" stop-color="#dfe2ec" />
              <stop offset="1" stop-color="#eff0f4" />
            </linearGradient>
          </defs>
          <path d="M443 731L1255 951l32-31v135H443z" fill="url(#refl)" />
          <path d="M803 960c-20 8-32 30-35 60" fill="none" stroke="#f6f6f7" stroke-width="2" />
          <path d="M803 960c24-13 62-1 86 25 20 22 34 46 38 70h-108c-20-32-26-66-16-95z" fill="#fbfbfd" />
          <g stroke="#111" stroke-width="1.200" stroke-linejoin="round">
            <path d="M443 337l32-31 812 220-32 32z" fill="#fefefe" />
            <path d="M1255 558l32-32v394l-32 31z" fill="#a5a8b5" />
            <path d="M443 337l812 221v393L443 731z" fill="#6e7179" />
            <g transform="translate(740 540) scale(.33333)" stroke-width="4">
              <path d="M190 78L262 65L328 74L390 101L447 138L500 190L538 250L565 320L571 380L565 435L553 458L540 488L500 528L450 552L390 561L328 552L268 526L205 488L152 436L108 352L88 310L80 245L88 187L113 135L152 97z" fill="url(#bore)" />
              <path d="M190 78L262 65L328 74L390 101L447 138L500 190L538 250L565 320L571 380L565 435L553 458L485 466L420 458L358 433L300 392L247 343L205 275L185 220L177 152z" fill="url(#through)" />
            </g>
          </g>
          <path d="M283 997v-18" stroke="#4d9e57" stroke-width="4" />
          <path d="M283 971l5 10h-10z" fill="#005a00" />
          <path d="M284 998l18 4" stroke="#c01818" stroke-width="3" />
          <path d="M300 998l10 5-9 3z" fill="#b00c0c" />
          <path d="M283 997l-9 8" stroke="#0000b8" stroke-width="4" />
          <circle cx="273" cy="1006" r="4.500" fill="#0000b8" />
          <g font-family="Open Sans, sans-serif" font-size="9">
            <text x="280" y="966" fill="#208020">Y</text>
            <text x="313" y="1006" fill="#e33">X</text>
            <text x="263" y="1013" fill="#22c">Z</text>
          </g>
        </svg>

        <div class="tabrow">
          <div class="tabs" role="tablist">
            <button v-for="(t, i) in tabs" :key="t.t" role="tab" :class="{ active: i === 0 }" :style="{ width: t.w + 'px' }">{{ t.t }}</button>
          </div>
          <div class="docbtns">
            <button v-for="b in docButtons" :key="b" :aria-label="b"><Icon :name="b" :size="20" /></button>
          </div>
        </div>

        <div class="middle">
          <aside class="manager">
            <div class="grip"><i></i></div>
            <div class="mtabs">
              <button v-for="(m, i) in managerTabs" :key="m" :class="{ active: i === 0 }" :aria-label="m"><Icon :name="m" :size="18" /></button>
              <button class="more" aria-label="Weitere">
                <svg width="8" height="12" viewBox="0 0 8 12"><path d="M1.500 1.500L6 6l-4.500 4.500" fill="none" stroke="#333" stroke-width="1.900" /></svg>
              </button>
            </div>
            <label class="filter"><Icon name="filter" :size="18" /><input type="text" aria-label="Filter" /></label>
            <ul class="tree">
              <li class="root"><Icon name="part" :size="18" />CAD-SAG-00000274</li>
              <li v-for="t in tree" :key="t.t"><span class="tw"><i v-if="t.open"></i></span><Icon :name="t.n" :size="18" />{{ t.t }}</li>
            </ul>
          </aside>
          <div class="view">
            <div class="viewtools">
              <template v-for="v in viewTools" :key="v.n">
                <button :aria-label="v.n"><Icon :name="v.n" :size="19" /></button>
                <i v-if="v.d" class="caret"></i>
              </template>
            </div>
            <nav class="task">
              <button v-for="t in taskTabs" :key="t" :aria-label="t"><Icon :name="t" :size="18" /></button>
            </nav>
            <button class="handle" aria-label="Bereich ausblenden"><i></i></button>
            <p class="orient">*Trimetrisch</p>
          </div>
        </div>

        <div class="sheets">
          <button v-for="n in navGlyphs" :key="n" class="nav" aria-label="Blättern">
            <svg width="14" height="12" viewBox="0 0 14 12"><path :d="n" fill="#8e9093" stroke="#8e9093" /></svg>
          </button>
          <button class="sheet active">Modell</button>
          <button class="sheet ansicht">3D-Ansichten</button>
          <button class="sheet studie">Bewegungsstudie 1</button>
        </div>
      </section>

      <aside class="panel">
        <div class="phead">
          <button aria-label="Ausblenden">
            <svg width="12" height="10" viewBox="0 0 12 10"><path d="M1 1l4 4-4 4M6.500 1l4 4-4 4" fill="none" stroke="#222" stroke-width="2" /></svg>
          </button>
          <h2>3DEXPERIENCE</h2>
          <button aria-label="Einstellungen"><Icon name="gear" :size="16" /></button>
          <button aria-label="Fixieren"><Icon name="pinDark" :size="15" /></button>
        </div>
        <div class="pbody">
          <div class="bar">
            <Icon name="compass" :size="31" />
            <button class="session">MySession - Engineer...<Icon name="chev" :size="16" /></button>
            <div class="psearch">
              <input type="text" placeholder="Suchen DS - R113210194" aria-label="Suchen" />
              <Icon name="search" :size="20" />
              <button aria-label="Suchoptionen"><Icon name="chev" :size="12" /></button>
            </div>
            <button class="tagb" aria-label="Tags"><Icon name="tag" :size="21" /></button>
            <button class="burger" aria-label="Menü"><Icon name="burger" :size="17" /></button>
          </div>
          <table>
            <thead>
              <tr><th class="cn">Komponentenname</th><th class="cs">Status</th><th class="cl"></th><th class="cr">Rev</th><th class="cb">Bearbeitun...</th><th>Beschreibung</th></tr>
            </thead>
            <tbody>
              <tr>
                <td class="name"><Icon name="partBlue" :size="22" />CAD-SAG-00000274</td>
                <td class="mid"><Icon name="dbOk" :size="21" /></td>
                <td class="mid"><Icon name="lock" :size="21" /></td>
                <td class="mid">B</td><td>In Arbeit</td><td></td>
              </tr>
            </tbody>
          </table>
          <button class="helmet" aria-label="Hilfe"><Icon name="helmet" :size="31" /></button>
          <div class="scroll"><i class="l"></i><b></b><i class="r"></i></div>
          <div class="dock">
            <div class="dtabs">
              <button v-for="(d, i) in dockTabs" :key="d.t" :class="{ active: i === 0 }" :style="{ width: d.w + 'px' }">{{ d.t }}</button>
              <button class="fav" aria-label="Favoriten"><Icon name="heart" :size="20" /></button>
            </div>
            <div class="dtools">
              <div class="primary"><button aria-label="Speichern"><Icon name="stack" :size="30" /></button><button class="dd" aria-label="Speicheroptionen"><i class="caret"></i></button></div>
              <button v-for="d in dockTools" :key="d" class="dt" :class="{ drop: d === 'lifecycle' }" :aria-label="d"><Icon :name="d" :size="29" /><i v-if="d === 'lifecycle'" class="caret"></i></button>
            </div>
          </div>
        </div>
      </aside>
    </main>

    <footer class="status">
      <span>SOLIDWORKS Premium 2024 SP0.1</span>
      <div class="sright">
        <span class="mode">Bearbeiten Teil</span>
        <button class="units">MMGS<i></i></button>
        <Icon name="statusTag" :size="17" />
      </div>
    </footer>

    <svg class="callout" viewBox="0 0 1996 1086" preserveAspectRatio="xMinYMin slice" aria-hidden="true">
      <g class="mark">
        <path d="M918 625L1718 264" stroke="#fd4343" stroke-width="11" stroke-linecap="round" />
        <path d="M1742 253l-33-1 13 28z" fill="#fd4343" stroke="#fd4343" />
        <path d="M1745 213h42v39h-42z" fill="none" stroke="#fd4343" stroke-width="3" />
      </g>
    </svg>
  </div>
</template>

<style>
body { margin: 0; }
</style>

<style scoped>
.app {
  position: relative;
  display: flex;
  flex-direction: column;
  box-sizing: border-box;
  min-height: 100vh;
  padding-right: 2px;
  overflow: hidden;
  background: #dcdde1;
  color: #111;
  font: 11px/13px "Open Sans", "Noto Sans", sans-serif;
}
.app * { box-sizing: border-box; }
button {
  display: flex; align-items: center; justify-content: center;
  margin: 0; padding: 0; border: 0; background: none; color: inherit; font: inherit; white-space: nowrap;
}
input { min-width: 0; border: 0; outline: 0; padding: 0; background: none; color: inherit; font: inherit; }
.ic { display: block; flex: none; }
.caret { flex: none; width: 0; height: 0; border: 3px solid transparent; border-top: 4px solid #444; border-bottom: 0; }

.strip { height: 6px; background: #f0f1f3; border-bottom: 1px solid #bbb; }
.titlebar { display: flex; align-items: center; height: 34px; background: #f7f7f7; border-bottom: 1px solid #bdbdbd; }
.logo { display: flex; flex: none; align-items: center; gap: 3px; width: 134px; padding-left: 4px; }
.brand { color: #d8342a; font-size: 13px; font-style: italic; font-weight: 400; line-height: 20px; }
.brand b { font-weight: 800; }
.menus { display: flex; flex: none; align-items: center; height: 33px; width: 357px; border-right: 1px solid #bbb; }
.menus button { flex: none; height: 27px; margin-right: 16px; }
.menus button.first { width: 43px; margin-right: 8px; background: #fff; border: 1px solid #aaa; }
.menus button.pin { margin: 0 4px 0 auto; }
.quick { display: flex; flex: none; align-items: center; }
.q { width: 28px; height: 28px; }
.home { margin: 0 2px 0 17px; }
.qd { width: 16px; height: 28px; }
.off { opacity: .6; }
.select { display: flex; height: 30px; border: 1px solid #777; }
.sel { width: 29px; background: #b0b0b0; border-right: 1px solid #777; }
.seld { width: 13px; background: #fff; }
.wide { width: 29px; }
.doc { display: flex; flex: 1; align-items: center; justify-content: center; gap: 5px; padding-left: 24px; white-space: nowrap; }
.cmd { display: flex; align-items: center; width: 252px; height: 23px; padding-left: 6px; background: #fff; border: 1px solid #bbb; color: #555; }
.cmd input { flex: 1; margin-left: 6px; }
input::placeholder { color: #666; opacity: 1; }
.cmds { gap: 7px; width: 35px; height: 21px; border-left: 1px solid #ddd; }
.winbtns { display: flex; gap: 16px; padding: 0 5px 0 11px; }
.winbtns button { width: 20px; height: 20px; }

.ribbon { display: flex; height: 82px; padding-left: 4px; background: #f7f7f7; border-bottom: 1px solid #777; }
.group { display: flex; height: 78px; margin-top: 1px; border-right: 1px solid #bbb; }
.group:last-of-type { border-right: 0; }
.big { position: relative; flex-direction: column; justify-content: flex-start; padding-top: 5px; white-space: normal; }
.big span { margin-top: 1px; max-width: 100px; }
.big .caret { position: absolute; bottom: 9px; }
.big.on { margin: 0 1px; background: #b0b0b0; border: 1px solid #666; padding-top: 4px; }
.col { display: flex; flex-direction: column; }
.small { justify-content: flex-start; gap: 7px; height: 26px; padding: 0 0 2px 3px; }
.fold { align-self: flex-end; margin: 0 8px 6px auto; width: 14px; height: 14px; }

.workspace { display: flex; flex: 1; }
.stage {
  position: relative; display: flex; flex: 1; flex-direction: column; overflow: hidden;
  background:
    linear-gradient(to bottom, rgba(225,229,240,0) 38%, rgba(225,229,240,.95) 57%, rgba(240,242,248,.6) 64%, rgba(255,255,255,0) 75%),
    radial-gradient(ellipse 42% 62% at 80% 24%, #d8dce9 0%, rgba(220,224,235,.8) 45%, rgba(255,255,255,0) 100%),
    linear-gradient(to bottom, #fff 80%, #f6f7fb 100%);
}
.scene { position: absolute; left: 0; top: 0; width: 100%; height: 100%; }
.tabrow { position: relative; display: flex; justify-content: space-between; height: 22px; }
.tabs { display: flex; }
.tabs button { border: 1px solid #808080; border-width: 0 1px 1px 0; background: #d3d3d3; color: #222; }
.tabs .active { background: #f7f7f7; font-weight: 700; border-bottom-color: #f7f7f7; color: #333; }
.docbtns { display: flex; gap: 6px; padding: 5px 8px 0 0; }
.docbtns button { width: 20px; height: 20px; }
.middle { position: relative; display: flex; flex: 1; }
.manager { width: 242px; background: #f7f7f7; border-right: 1px solid #777; }
.grip { display: flex; align-items: center; justify-content: center; height: 20px; margin-right: 3px; border: 1px solid #bbb; border-width: 1px 0; }
.grip i { width: 6px; height: 6px; border: 1px solid #999; border-radius: 50%; background: #ddd; }
.mtabs { display: flex; height: 26px; margin: 4px 3px 0 0; border-bottom: 1px solid #aaa; }
.mtabs button { width: 40px; border: 1px solid #888; border-left: 0; background: #d0d0d0; }
.mtabs .active { width: 41px; background: #f7f7f7; }
.mtabs button.more { width: auto; margin: 0 7px 0 auto; border: 0; background: none; }
.filter { display: flex; align-items: center; height: 26px; margin: 0 5px 0 4px; padding-left: 2px; border: 1px solid #bbb; }
.filter input { flex: 1; }
.tree { margin: 0 3px 0 0; padding: 0; list-style: none; border-bottom: 3px solid #3f80b5; }
.tree li { display: flex; align-items: center; gap: 5px; height: 22px; }
.tree .root { padding-left: 3px; }
.tw { width: 21px; padding-left: 9px; }
.tw i { display: block; width: 0; height: 0; border: 4px solid transparent; border-left: 5px solid #666; border-right: 0; }
.view { position: relative; display: flex; flex: 1; flex-direction: column; }
.viewtools { display: flex; align-items: center; justify-content: center; height: 28px; padding: 2px 4px 0 0; }
.viewtools button { width: 26px; height: 26px; }
.viewtools .caret { margin: 0 4px; border-top-color: #888; }
.task { align-self: flex-end; width: 26px; border: 1px solid #777; border-right: 0; }
.task button { width: 25px; height: 24px; background: #d5d5d5; border-bottom: 1px solid #888; }
.task button:last-child { background: #f4f5f8; border: 0; }
.handle { position: absolute; left: 0; top: 46%; width: 8px; height: 39px; margin-top: 6px; border: 1px solid #888; border-left: 0; background: #f7f7f7; }
.handle i { width: 4px; height: 4px; border: 1px solid #888; border-radius: 50%; }
.orient { margin: auto 0 2px 12px; font-size: 12px; font-weight: 700; line-height: 15px; }
.sheets { position: relative; display: flex; height: 16px; background: #f7f7f7; border: 1px solid #777; border-width: 1px 0; }
.sheets button { flex: none; border-right: 1px solid #888; }
.nav { width: 16px; background: #a9abae; }
.sheet { padding-bottom: 1px; background: #d3d3d3; font-size: 12px; }
.sheet.active { width: 62px; padding-left: 4px; background: #f7f7f7; font-weight: 700; }
.ansicht { width: 92px; }
.studie { width: 132px; padding-right: 4px; }

.panel { display: flex; flex: none; flex-direction: column; width: 561px; border-left: 2px solid #85868a; border-right: 1px solid #888; background: #f7f7f7; }
.phead { display: flex; align-items: center; gap: 4px; height: 22px; padding: 0 3px 0 7px; background: #aaabaf; border-bottom: 1px solid #111; }
.phead h2 { flex: 1; margin: 0; font-size: 12px; line-height: 16px; text-align: center; }
.pbody { position: relative; display: flex; flex: 1; flex-direction: column; margin: 2px 0 2px 4px; border: 1px solid #ccc; border-bottom: 2px solid #777; border-right: 0; background: #fff; font-family: "Liberation Sans", Arial, sans-serif; }
.bar { display: flex; align-items: center; height: 44px; padding: 0 15px 0 6px; background: #005686; color: #fff; }
.session { flex: none; gap: 13px; margin-left: 15px; font: 15px/20px "Open Sans", sans-serif; }
.psearch { display: flex; flex: 1; min-width: 0; align-items: center; height: 30px; margin: 0 0 0 4px; padding: 0 12px; border-radius: 3px; background: #fff; color: #444; font-size: 14px; }
.psearch input { flex: 1 1 0; width: 0; margin-right: -24px; }
.psearch input::placeholder { color: #a5a5a5; }
.psearch > .ic { margin-right: 20px; }
.tagb { flex: none; margin: 0 24px 0 13px; }
table { width: 100%; border-collapse: collapse; table-layout: fixed; font-size: 13px; line-height: 16px; }
th { height: 31px; padding: 0 0 0 6px; background: #f0f0f0; border-right: 1px solid #fafafa; color: #555; font-size: 14px; font-weight: 400; text-align: left; white-space: nowrap; }
td { height: 26px; padding: 0 0 0 6px; border-bottom: 1px solid #eee; }
.cn { width: 200px; } .cs { width: 60px; } .cl { width: 40px; } .cr { width: 40px; } .cb { width: 100px; }
.name { display: flex; align-items: center; gap: 10px; padding-left: 40px; }
.mid { padding: 0 0 0 4px; text-align: center; }
.mid .ic { margin: auto; }
.helmet { position: absolute; left: 6px; bottom: 106px; width: 44px; height: 44px; border: 1px solid #ccc; border-radius: 50%; background: #fff; box-shadow: 0 1px 6px #ccc; }
.scroll { display: flex; align-items: center; height: 16px; margin-top: auto; padding: 0 6px; background: #f0f0f0; }
.scroll b { width: 60px; height: 14px; margin: 0 auto 0 8px; background: #c1c1c1; }
.scroll i { border: 4px solid transparent; }
.scroll .l { border-left: 0; border-right: 5px solid #888; }
.scroll .r { border-right: 0; border-left: 5px solid #444; }
.dock { position: absolute; right: 59px; bottom: 0; width: 434px; }
.dtabs { display: flex; height: 23px; font-size: 12px; color: #444; }
.dtabs button { flex: none; background: #e1e4e3; border-top: 2px solid #aaa; }
.dtabs button.active { background: #9ec8dd; }
.dtabs button.fav { padding: 0 0 0 3px; width: 24px; background: none; border: 0; }
.dtools { display: flex; height: 49px; border-top: 2px solid #999; border-right: 2px solid #bbb; background: #e1e4e3; }
.primary { display: flex; justify-content: flex-end; width: 88px; background: #fff; border: 1px solid #888; border-width: 0 1px 0 1px; border-left-color: #bbb; }
.dd { width: 18px; margin: 6px 0 4px 1px; padding-right: 2px; border-left: 1px solid #ccc; }
.dock .caret { border-top-color: #111; }
.dt { width: 42px; }
.dt.drop { justify-content: flex-start; gap: 5px; width: 54px; padding-left: 7px; }

.status { display: flex; justify-content: space-between; height: 16px; padding-top: 2px; background: #f7f7f7; line-height: 14px; }
.sright { display: flex; width: 383px; }
.mode { width: 227px; }
.units { gap: 48px; margin-right: 32px; }
.units i { border: 3px solid transparent; border-top: 0; border-bottom: 4px solid #333; }
.callout { position: absolute; left: 0; top: 0; width: 100%; height: 100%; pointer-events: none; }
.mark { filter: drop-shadow(2px 4px 2px rgba(0,0,0,.45)); }
</style>
